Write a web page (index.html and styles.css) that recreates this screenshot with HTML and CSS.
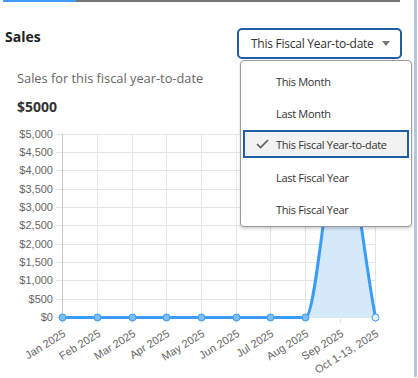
FILE: index.html
```html
<!DOCTYPE html>
<html>
<head>
<meta charset="utf-8">
<link rel="stylesheet" href="styles.css">
</head>
<body>
<div class="page">
  <div class="main">
    <div class="tabbar"><div class="tab-active"></div><div class="tab-rest"></div></div>
    <div class="header">
      <div class="title">Sales</div>
      <div class="picker">
        <button class="select"><span>This Fiscal Year-to-date</span><span class="caret"></span></button>
        <ul class="menu">
          <li class="item">This Month</li>
          <li class="item">Last Month</li>
          <li class="item selected"><svg class="check" width="13" height="10" viewBox="0 0 13 10"><path d="M1 5 L4.5 8.5 L12 1" fill="none" stroke="#5a5a5a" stroke-width="1.6"/></svg>This Fiscal Year-to-date</li>
          <li class="item">Last Fiscal Year</li>
          <li class="item">This Fiscal Year</li>
        </ul>
      </div>
    </div>
    <div class="card">
      <div class="subtitle">Sales for this fiscal year-to-date</div>
      <div class="amount">$5000</div>
    </div>
    <svg class="chart" width="414" height="258" viewBox="0 0 414 258">
      <g class="grid" stroke="#e5e5e5" stroke-width="1">
        <line x1="56" y1="14.5" x2="375.5" y2="14.5"/>
        <line x1="56" y1="32.5" x2="375.5" y2="32.5"/>
        <line x1="56" y1="50.5" x2="375.5" y2="50.5"/>
        <line x1="56" y1="69.5" x2="375.5" y2="69.5"/>
        <line x1="56" y1="87.5" x2="375.5" y2="87.5"/>
        <line x1="56" y1="105.5" x2="375.5" y2="105.5"/>
        <line x1="56" y1="124.5" x2="375.5" y2="124.5"/>
        <line x1="56" y1="142.5" x2="375.5" y2="142.5"/>
        <line x1="56" y1="160.5" x2="375.5" y2="160.5"/>
        <line x1="56" y1="179.5" x2="375.5" y2="179.5"/>
        <line x1="56" y1="197.5" x2="375.5" y2="197.5"/>
        <line x1="97.5" y1="14" x2="97.5" y2="203"/>
        <line x1="132.5" y1="14" x2="132.5" y2="203"/>
        <line x1="166.5" y1="14" x2="166.5" y2="203"/>
        <line x1="201.5" y1="14" x2="201.5" y2="203"/>
        <line x1="236.5" y1="14" x2="236.5" y2="203"/>
        <line x1="270.5" y1="14" x2="270.5" y2="203"/>
        <line x1="305.5" y1="14" x2="305.5" y2="203"/>
        <line x1="340.5" y1="14" x2="340.5" y2="203"/>
        <line x1="375.5" y1="14" x2="375.5" y2="203"/>
      </g>
      <line x1="62.5" y1="14" x2="62.5" y2="203" stroke="#c8c8c8"/>
      <g class="ylabels">
        <text x="53" y="18">$5,000</text>
        <text x="53" y="36">$4,500</text>
        <text x="53" y="54">$4,000</text>
        <text x="53" y="73">$3,500</text>
        <text x="53" y="91">$3,000</text>
        <text x="53" y="109">$2,500</text>
        <text x="53" y="128">$2,000</text>
        <text x="53" y="146">$1,500</text>
        <text x="53" y="164">$1,000</text>
        <text x="53" y="183">$500</text>
        <text x="53" y="201">$0</text>
      </g>
      <g class="xlabels">
        <text transform="translate(66.5 215.5) rotate(-32)">Jan 2025</text>
        <text transform="translate(101.5 215.5) rotate(-32)">Feb 2025</text>
        <text transform="translate(136.5 215.5) rotate(-32)">Mar 2025</text>
        <text transform="translate(170.5 215.5) rotate(-32)">Apr 2025</text>
        <text transform="translate(205.5 215.5) rotate(-32)">May 2025</text>
        <text transform="translate(240.5 215.5) rotate(-32)">Jun 2025</text>
        <text transform="translate(274.5 215.5) rotate(-32)">Jul 2025</text>
        <text transform="translate(309.5 215.5) rotate(-32)">Aug 2025</text>
        <text transform="translate(344.5 215.5) rotate(-32)">Sep 2025</text>
        <text transform="translate(379.5 215.5) rotate(-32)">Oct 1-13, 2025</text>
      </g>
      <path d="M305.5 197.5 C317 197.5 329 14.5 340.5 14.5 C352 14.5 364 139 375.5 197.5 Z" fill="#d5e9fb"/>
      <path d="M62.5 197.5 L305.5 197.5 C317 197.5 329 14.5 340.5 14.5 C352 14.5 364 139 375.5 197.5" fill="none" stroke="#3a9cf4" stroke-width="3"/>
      <g fill="#7dbcf5" stroke="#3a9cf4" stroke-width="1">
        <circle cx="62.5" cy="197.5" r="3.5"/>
        <circle cx="97.5" cy="197.5" r="3.5"/>
        <circle cx="132.5" cy="197.5" r="3.5"/>
        <circle cx="166.5" cy="197.5" r="3.5"/>
        <circle cx="201.5" cy="197.5" r="3.5"/>
        <circle cx="236.5" cy="197.5" r="3.5"/>
        <circle cx="270.5" cy="197.5" r="3.5"/>
        <circle cx="305.5" cy="197.5" r="3.5"/>
        <circle cx="340.5" cy="14.5" r="3.5"/>
        <circle cx="375.5" cy="197.5" r="3.5" fill="#e6f2fd"/>
      </g>
    </svg>
  </div>
  <div class="edge"></div>
</div>
</body>
</html>
```
FILE: styles.css
```css
* { box-sizing: border-box; }
html, body { margin: 0; padding: 0; background: #fff; }
body { font-family: "Open Sans", "Noto Sans", sans-serif; color: #333; width: 418px; height: 378px; overflow: hidden; }
.page { display: flex; height: 378px; }
.main { width: 414px; position: relative; }
.edge { width: 3px; height: 377px; background: #b3c6df; }

.tabbar { display: flex; height: 2px; padding-left: 3px; }
.tab-active { width: 73px; background: #3f9cf2; }
.tab-rest { width: 324px; background: #777; }

.header { display: flex; justify-content: space-between; align-items: flex-start; margin-top: 26px; padding: 0 12px 0 5px; height: 31px; }
.title { font-weight: 700; font-size: 14px; line-height: 17px; color: #222; }
.picker { position: relative; }
.select { display: flex; align-items: center; width: 165px; height: 31px; border: 2px solid #1f5ea6; border-radius: 5px; background: #fff; padding: 0 10px 0 12px; font-family: inherit; font-size: 12px; letter-spacing: -0.25px; color: #333; cursor: pointer; white-space: nowrap; }
.select span:first-child { flex: 1; text-align: left; }
.caret { width: 0; height: 0; border-left: 4px solid transparent; border-right: 4px solid transparent; border-top: 5px solid #777; }

.menu { position: absolute; left: 3px; top: 32px; width: 172px; height: 167px; margin: 0; padding: 4px 0 0; list-style: none; background: #fff; border: 1px solid #9a9a9a; border-radius: 4px; box-shadow: 0 2px 3px rgba(0,0,0,0.18); z-index: 5; }
.item { display: flex; align-items: center; height: 32px; padding-left: 35px; font-size: 11px; letter-spacing: -0.3px; color: #333; white-space: nowrap; }
.item.selected { height: 28px; margin: 1px 2px 3px; padding-left: 11px; border: 2px solid #1f5ea6; background: #f2f2f2; }
.check { margin-right: 7px; }

.card { padding: 10px 0 0 17px; }
.subtitle { font-size: 12.8px; line-height: 18px; color: #666; }
.amount { margin-top: 10px; font-size: 14px; line-height: 20px; font-weight: 700; color: #333; }

.chart { display: block; margin-top: 3px; }
.chart text { font-family: "Liberation Sans", Arial, sans-serif; font-size: 11px; fill: #666; }
.ylabels text { text-anchor: end; }
.xlabels text { text-anchor: end; }
```
